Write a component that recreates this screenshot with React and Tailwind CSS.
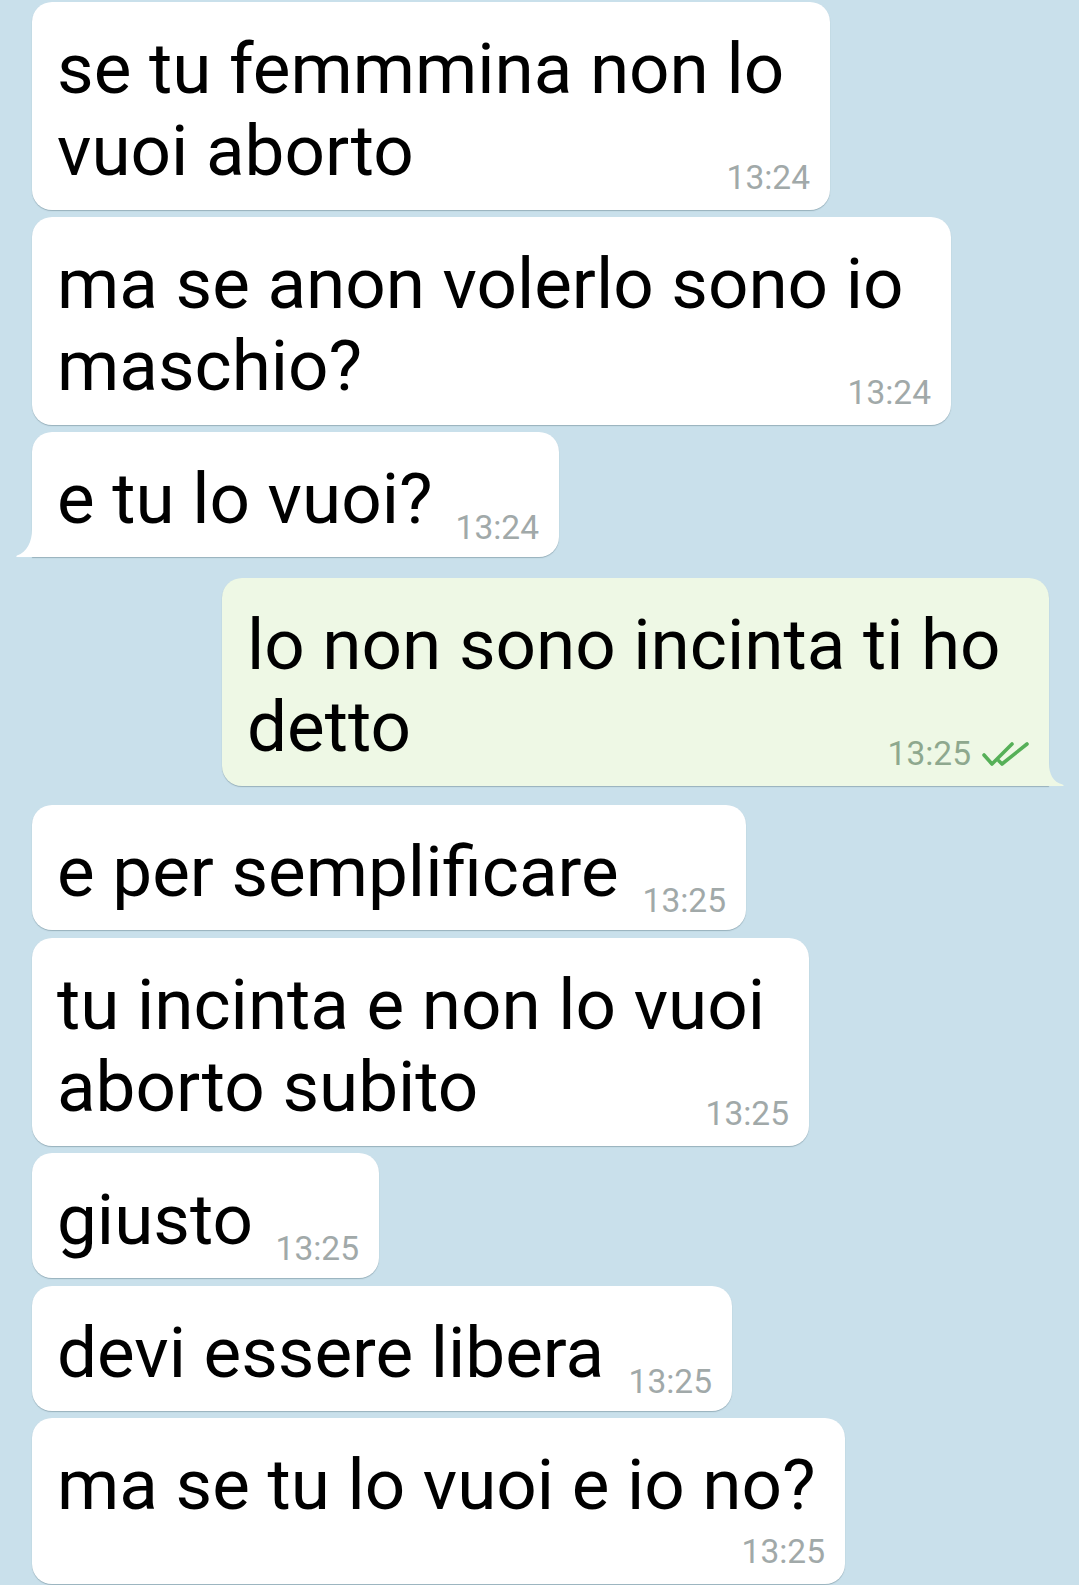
import React from "react";

const messages = [
  { lines: ["se tu femmmina non lo", "vuoi aborto"], time: "13:24", w: "w-[798px]", mode: "overlap", gap: "mt-[2px]" },
  { lines: ["ma se anon volerlo sono io", "maschio?"], time: "13:24", w: "w-[919px]", mode: "overlap", gap: "mt-[7px]" },
  { lines: ["e tu lo vuoi?"], time: "13:24", w: "w-[527px]", mode: "inline", gap: "mt-[7px]", tail: true },
  { lines: ["lo non sono incinta ti ho", "detto"], time: "13:25", w: "w-[827px]", mode: "overlap", gap: "mt-[21px]", out: true, tail: true },
  { lines: ["e per semplificare"], time: "13:25", w: "w-[714px]", mode: "inline", gap: "mt-[19px]" },
  { lines: ["tu incinta e non lo vuoi", "aborto subito"], time: "13:25", w: "w-[777px]", mode: "overlap", gap: "mt-[8px]" },
  { lines: ["giusto"], time: "13:25", w: "w-[347px]", mode: "inline", gap: "mt-[7px]" },
  { lines: ["devi essere libera"], time: "13:25", w: "w-[700px]", mode: "inline", gap: "mt-[8px]" },
  { lines: ["ma se tu lo vuoi e io no?"], time: "13:25", w: "w-[813px]", mode: "below", gap: "mt-[7px]" },
];

const Ticks = () => (
  <svg width="50" height="27" viewBox="0 0 50 27" className="ml-[10px]" fill="none" stroke="#56b058" strokeWidth="3.6" strokeLinecap="round" strokeLinejoin="round">
    <path d="M3 14 L11 23 L31 3" />
    <path d="M18 20 L21 23 L46 3" />
  </svg>
);

const Time = ({ time, out }) => (
  <div className="flex items-center">
    <span className={`text-[33.5px] leading-[38px] ${out ? "text-[#8ea88e]" : "text-[#a1a9a9]"}`}>{time}</span>
    {out && <Ticks />}
  </div>
);

const Text = ({ lines }) => (
  <div className="text-[71px] leading-[82px] text-black whitespace-nowrap">
    {lines.map((l, i) => (
      <div key={i}>{l}</div>
    ))}
  </div>
);

const Bubble = ({ m }) => {
  const bg = m.out ? "bg-[#eef8e5]" : "bg-white";
  let corner = "rounded-[20px]";
  if (m.tail && m.out) corner = "rounded-[20px] rounded-br-none";
  if (m.tail && !m.out) corner = "rounded-[20px] rounded-bl-none";
  return (
    <div className={`flex ${m.out ? "justify-end pr-[30px]" : "pl-[32px]"} ${m.gap}`}>
      <div className={`relative ${m.w} ${bg} ${corner} shadow-[0_1px_1px_rgba(60,90,100,0.35)] pl-[25px] pr-[20px] pt-[26px]`}>
        {m.mode === "inline" && (
          <div className="flex justify-between items-start pb-[10px]">
            <Text lines={m.lines} />
            <div className="mt-[51px]">
              <Time time={m.time} out={m.out} />
            </div>
          </div>
        )}
        {m.mode === "overlap" && (
          <div className="pb-[13px]">
            <Text lines={m.lines} />
            <div className={`flex justify-end -mt-[33px] ${m.out ? "-mr-[2px]" : ""}`}>
              <Time time={m.time} out={m.out} />
            </div>
          </div>
        )}
        {m.mode === "below" && (
          <div className="pb-[13px]">
            <Text lines={m.lines} />
            <div className="flex justify-end mt-[7px]">
              <Time time={m.time} out={m.out} />
            </div>
          </div>
        )}
        {m.tail && !m.out && (
          <svg className="absolute left-[-16px] bottom-0" width="17" height="28" viewBox="0 0 17 28">
            <path d="M17 0 L16 0 C16 13 11 23 1 26.5 C0 27 0 28 1 28 L17 28 Z" fill="#ffffff" />
          </svg>
        )}
        {m.tail && m.out && (
          <svg className="absolute right-[-15px] bottom-0" width="16" height="23" viewBox="0 0 16 23">
            <path d="M0 0 L1 0 C1 11 5 19 14.5 21.5 C16 22 16 23 15 23 L0 23 Z" fill="#eef8e5" />
          </svg>
        )}
      </div>
    </div>
  );
};

export default function App() {
  return (
    <div className="w-[1079px] h-[1585px] overflow-hidden bg-[#c9e0eb] font-['Roboto',sans-serif]">
      {messages.map((m, i) => (
        <Bubble key={i} m={m} />
      ))}
    </div>
  );
}
